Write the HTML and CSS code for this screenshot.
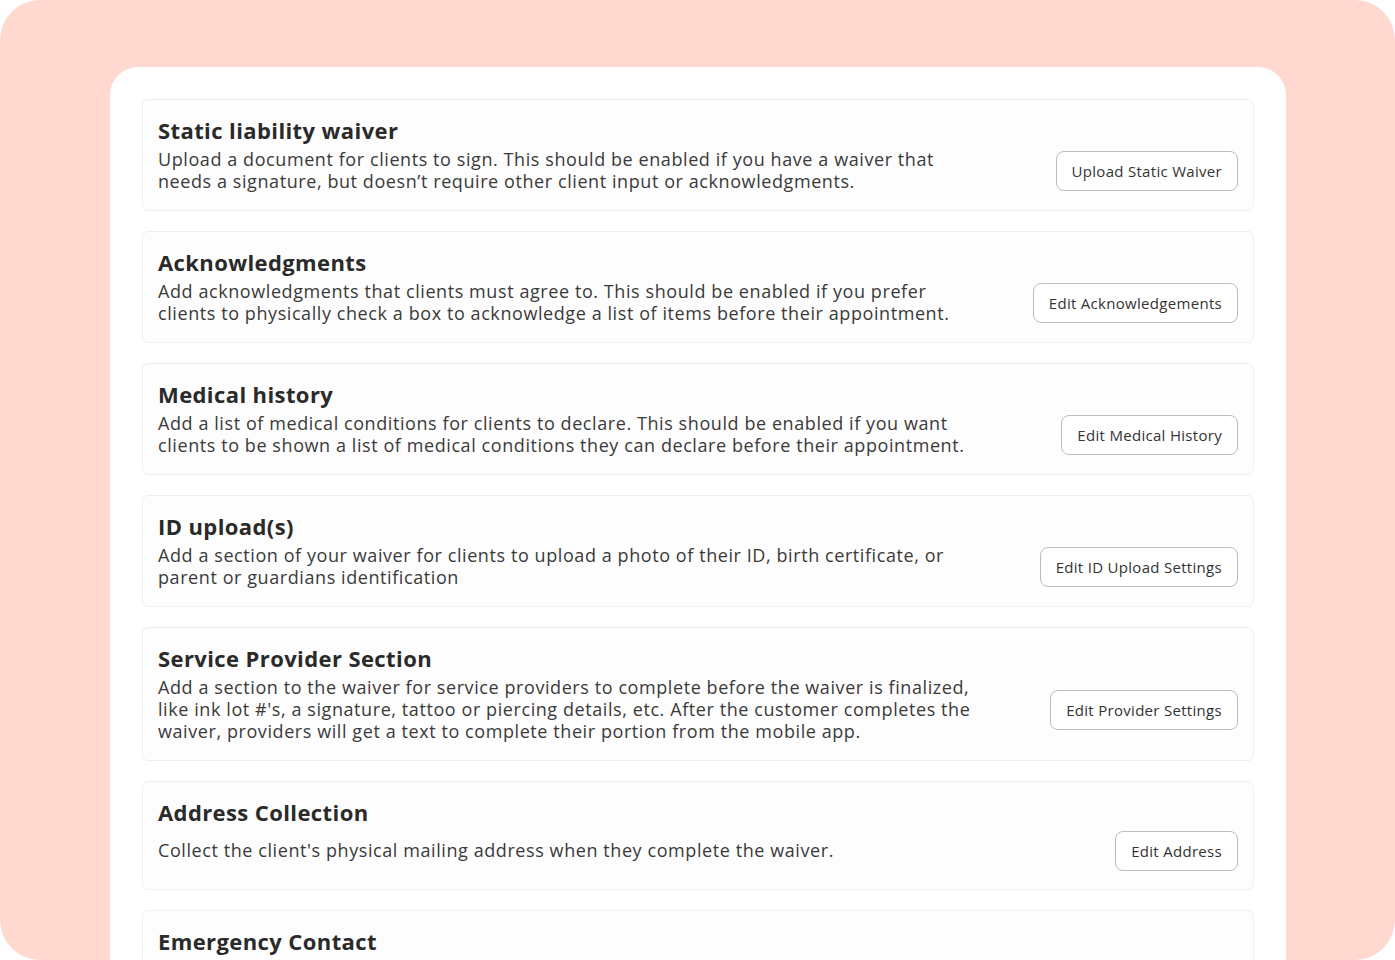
FILE: index.html
```html
<!DOCTYPE html>
<html>
<head>
<meta charset="utf-8">
<link rel="stylesheet" href="styles.css">
</head>
<body>
<div class="backdrop">
  <div class="panel">
    <section class="card">
      <h2 class="title">Static liability waiver</h2>
      <div class="row">
        <p class="desc">Upload a document for clients to sign. This should be enabled if you have a waiver that<br>needs a signature, but doesn’t require other client input or acknowledgments.</p>
        <button class="btn">Upload Static Waiver</button>
      </div>
    </section>
    <section class="card">
      <h2 class="title">Acknowledgments</h2>
      <div class="row">
        <p class="desc">Add acknowledgments that clients must agree to. This should be enabled if you prefer<br>clients to physically check a box to acknowledge a list of items before their appointment.</p>
        <button class="btn">Edit Acknowledgements</button>
      </div>
    </section>
    <section class="card">
      <h2 class="title">Medical history</h2>
      <div class="row">
        <p class="desc">Add a list of medical conditions for clients to declare. This should be enabled if you want<br>clients to be shown a list of medical conditions they can declare before their appointment.</p>
        <button class="btn">Edit Medical History</button>
      </div>
    </section>
    <section class="card">
      <h2 class="title">ID upload(s)</h2>
      <div class="row">
        <p class="desc">Add a section of your waiver for clients to upload a photo of their ID, birth certificate, or<br>parent or guardians identification</p>
        <button class="btn">Edit ID Upload Settings</button>
      </div>
    </section>
    <section class="card">
      <h2 class="title">Service Provider Section</h2>
      <div class="row">
        <p class="desc">Add a section to the waiver for service providers to complete before the waiver is finalized,<br>like ink lot #'s, a signature, tattoo or piercing details, etc. After the customer completes the<br>waiver, providers will get a text to complete their portion from the mobile app.</p>
        <button class="btn">Edit Provider Settings</button>
      </div>
    </section>
    <section class="card card-tall">
      <h2 class="title">Address Collection</h2>
      <div class="row">
        <p class="desc">Collect the client's physical mailing address when they complete the waiver.</p>
        <button class="btn">Edit Address</button>
      </div>
    </section>
    <section class="card">
      <h2 class="title">Emergency Contact</h2>
      <div class="row">
        <p class="desc">Collect an emergency contact for the client when they complete the waiver.</p>
        <button class="btn">Edit Emergency Contact</button>
      </div>
    </section>
  </div>
</div>
</body>
</html>
```
FILE: styles.css
```css
html, body {
  margin: 0;
  padding: 0;
  background: #ffffff;
  height: 100%;
  overflow: hidden;
}
body {
  font-family: "Open Sans", "Liberation Sans", sans-serif;
  color: #333;
}
.backdrop {
  height: 960px;
  background: #ffd9cf;
  border-radius: 40px;
  padding: 67px 109px 0 110px;
  box-sizing: border-box;
  overflow: hidden;
}
.panel {
  background: #ffffff;
  border-radius: 28px 28px 0 0;
  padding: 32px 32px 0 32px;
  display: flex;
  flex-direction: column;
  gap: 20px;
  min-height: 900px;
}
.card {
  background: #fdfdfd;
  border: 1px solid #efefef;
  border-radius: 6px;
  padding: 17px 15px 17px 15px;
}
.card-tall {
  padding-bottom: 18px;
}
.title {
  margin: 0;
  font-size: 22px;
  line-height: 26px;
  font-weight: 700;
  letter-spacing: 0.4px;
  color: #2a2a2a;
}
.row {
  margin-top: 6px;
  display: flex;
  align-items: center;
  justify-content: space-between;
  min-height: 40px;
}
.desc {
  margin: 0;
  font-size: 18px;
  line-height: 22px;
  letter-spacing: 0.58px;
  color: #3a3a3a;
  white-space: nowrap;
  position: relative;
  top: -1px;
}
.btn {
  height: 40px;
  padding: 0 15px;
  border: 1px solid #bdbdbd;
  border-radius: 8px;
  background: #fff;
  font-family: inherit;
  font-size: 15px;
  letter-spacing: 0.3px;
  color: #333;
  white-space: nowrap;
  flex: none;
}
```
